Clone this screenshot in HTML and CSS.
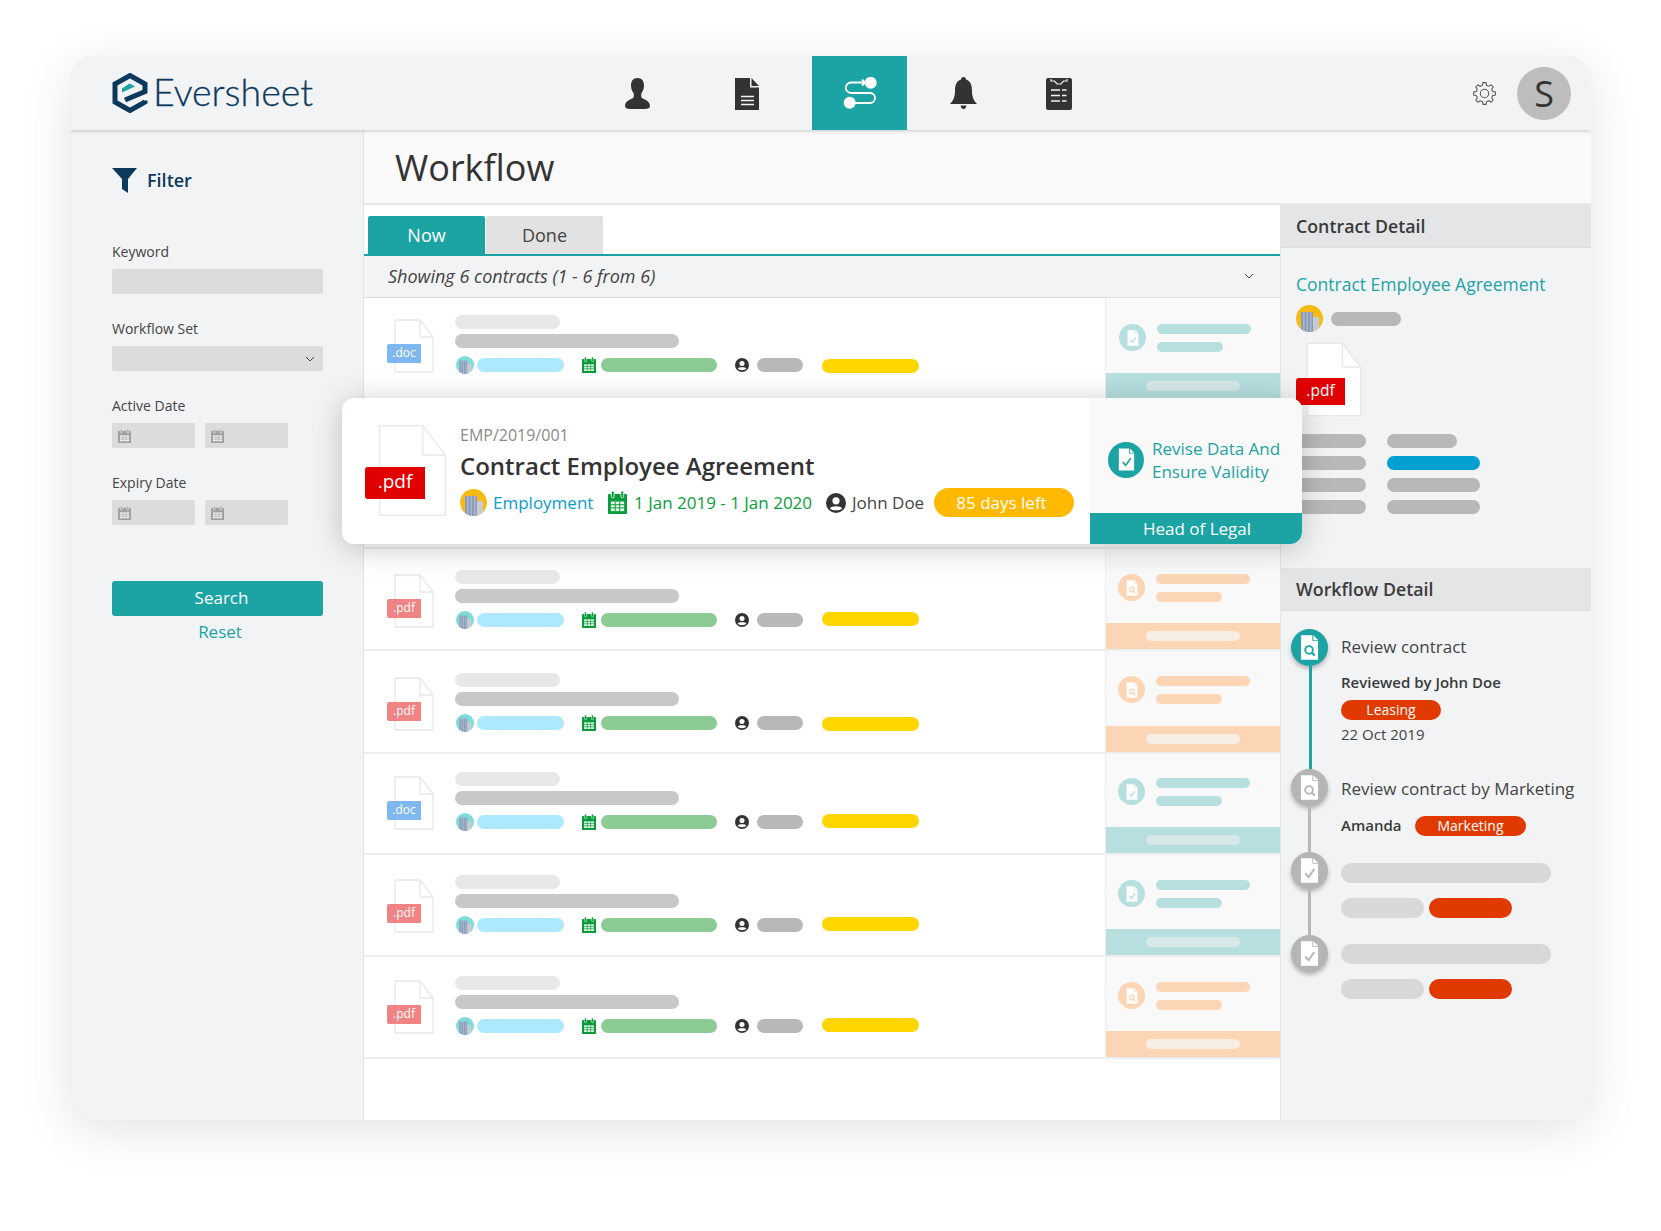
FILE: index.html
```html
<!DOCTYPE html>
<html lang="en">
<head>
<meta charset="utf-8">
<title>Eversheet Workflow</title>
<link rel="stylesheet" href="styles.css">
</head>
<body>
<svg class="defs" xmlns="http://www.w3.org/2000/svg">
  <symbol id="i-page" viewBox="0 0 40 54" preserveAspectRatio="none">
    <path d="M1 1H26L39 18V53H1Z" fill="#fff" stroke="#e8e8e8" stroke-width="1.3" vector-effect="non-scaling-stroke"/>
    <path d="M26 1V18H39" fill="none" stroke="#e8e8e8" stroke-width="1.3" vector-effect="non-scaling-stroke"/>
  </symbol>
  <symbol id="i-building" viewBox="0 0 27 27">
    <rect x="5" y="7" width="12" height="20" fill="#8c9bb8"/>
    <rect x="7" y="7" width="1.5" height="20" fill="#aab6cb"/>
    <rect x="10.5" y="7" width="1.5" height="20" fill="#aab6cb"/>
    <rect x="14" y="7" width="1.5" height="20" fill="#aab6cb"/>
    <rect x="17" y="12" width="6" height="15" fill="#c6cbd4"/>
  </symbol>
  <symbol id="i-cal" viewBox="0 0 20 24" preserveAspectRatio="none">
    <rect x="0" y="3" width="20" height="21" rx="1" fill="currentColor"/>
    <rect x="3.5" y="0" width="3" height="7" rx="1.5" fill="currentColor" stroke="#fff" stroke-width=".8"/>
    <rect x="13.5" y="0" width="3" height="7" rx="1.5" fill="currentColor" stroke="#fff" stroke-width=".8"/>
    <rect x="3" y="11" width="14" height="10" fill="#fff" opacity=".9"/>
    <path d="M3 14.3H17M3 17.6H17M7.6 11V21M12.3 11V21" stroke="currentColor" stroke-width="1"/>
  </symbol>
  <symbol id="i-user" viewBox="0 0 20 20">
    <circle cx="10" cy="10" r="10" fill="#333"/>
    <circle cx="10" cy="7.8" r="3.6" fill="#fff"/>
    <path d="M3.8 15.4C5 12.6 15 12.6 16.2 15.4 14 18 6 18 3.8 15.4Z" fill="#fff"/>
  </symbol>
  <symbol id="i-check" viewBox="0 0 20 26">
    <path d="M1 0H13V6H19V26H1Z" fill="#fff"/>
    <path d="M14 0L19 5H14Z" fill="#fff"/>
    <path d="M5.5 16L9 20L15 11.5" fill="none" stroke="currentColor" stroke-width="2"/>
  </symbol>
  <symbol id="i-search" viewBox="0 0 20 26">
    <path d="M1 0H13V6H19V26H1Z" fill="#fff"/>
    <path d="M14 0L19 5H14Z" fill="#fff"/>
    <circle cx="9.5" cy="15.5" r="4" fill="none" stroke="currentColor" stroke-width="2"/>
    <path d="M12.5 18.5L15.5 21.5" stroke="currentColor" stroke-width="2.2"/>
  </symbol>
  <symbol id="i-tooth" viewBox="-11 -11 22 22">
    <polyline points="-1.94,-7.76 -1.46,-10.4 1.46,-10.4 1.94,-7.76 4.12,-6.86" fill="none" stroke="#555" stroke-width="1"/>
  </symbol>
</svg>

<div class="stage">
  <div class="window">
    <header class="topbar">
      <div class="brand">
        <svg class="logo" viewBox="0 0 36 40" xmlns="http://www.w3.org/2000/svg">
          <path d="M33 27.5V29L18 37.5 3 29V11L18 2.5 33 11V18.5L13 27" fill="none" stroke="#0d3a5c" stroke-width="5"/>
          <path d="M10 15.5L17.500 10.500 23 13.500 10 19.500Z" fill="#1ca3a3"/>
        </svg>
        <span class="brand-name">Eversheet</span>
      </div>
      <nav class="nav">
        <svg class="nav-person" viewBox="0 0 25 31" xmlns="http://www.w3.org/2000/svg"><path d="M12.500 0C17 0 19 3 19 7.500 19 11 18 13 16.500 15 16 16.500 16 18 16.500 19.500 18 21.500 25 22 25 28 25 30 23 31 20 31H5C2 31 0 30 0 28 0 22 7 21.500 8.500 19.500 9 18 9 16.500 8.500 15 7 13 6 11 6 7.500 6 3 8 0 12.500 0Z" fill="#333"/></svg>
        <svg class="nav-doc" viewBox="0 0 24 32" xmlns="http://www.w3.org/2000/svg"><path d="M0 0H15V9.500H24V32H0Z" fill="#333"/><path d="M16.500 0L24 8H16.500Z" fill="#333"/><path d="M6 18.500H19M6 22.500H19M6 26.500H19" stroke="#f2f3f5" stroke-width="1.600"/></svg>
        <div class="nav-active">
          <svg class="nav-flow" viewBox="0 0 34 34" xmlns="http://www.w3.org/2000/svg"><circle cx="27.700" cy="6.700" r="6" fill="#fff"/><circle cx="6.700" cy="26.700" r="6" fill="#fff"/><path d="M22 6.500H8A5.200 5.200 0 0 0 8 17H27A5 5 0 0 1 27 27H12M19 3.500L22 6.500 19 9.500" fill="none" stroke="#fff" stroke-width="1.800"/></svg>
        </div>
        <svg class="nav-bell" viewBox="0 0 27 32" xmlns="http://www.w3.org/2000/svg"><path d="M13.500 0C15 0 16 1 16 2.500 21 4 22 9 22 14 22 20 24 24 27 27H0C3 24 5 20 5 14 5 9 6 4 11 2.500 11 1 12 0 13.500 0Z" fill="#333"/><path d="M10.500 28.500H16.500C16 31 15 32 13.500 32 12 32 11 31 10.500 28.500Z" fill="#333"/></svg>
        <svg class="nav-clip" viewBox="0 0 26 32" xmlns="http://www.w3.org/2000/svg"><rect width="26" height="32" rx="2" fill="#333"/><path d="M5 1V3H8.500L11 6H15L17.500 3H21V1" fill="none" stroke="#f2f3f5" stroke-width="1.200"/><path d="M5 12H14M16 12H20.500M5 17.500H14M16 17.500H20.500M5 23H14M16 23H20.500" stroke="#f2f3f5" stroke-width="1.600"/></svg>
      </nav>
      <div class="account">
        <svg class="gear" viewBox="-11 -11 22 22" xmlns="http://www.w3.org/2000/svg">
          <use href="#i-tooth" x="-11" y="-11" width="22" height="22"/>
          <use href="#i-tooth" x="-11" y="-11" width="22" height="22" transform="rotate(45)"/>
          <use href="#i-tooth" x="-11" y="-11" width="22" height="22" transform="rotate(90)"/>
          <use href="#i-tooth" x="-11" y="-11" width="22" height="22" transform="rotate(135)"/>
          <use href="#i-tooth" x="-11" y="-11" width="22" height="22" transform="rotate(180)"/>
          <use href="#i-tooth" x="-11" y="-11" width="22" height="22" transform="rotate(225)"/>
          <use href="#i-tooth" x="-11" y="-11" width="22" height="22" transform="rotate(270)"/>
          <use href="#i-tooth" x="-11" y="-11" width="22" height="22" transform="rotate(315)"/>
          <circle r="4" fill="none" stroke="#555" stroke-width="1"/>
        </svg>
        <div class="avatar">S</div>
      </div>
    </header>

    <div class="body">
      <aside class="sidebar">
        <div class="filter-head">
          <svg class="filter-icon" viewBox="0 0 25 25" xmlns="http://www.w3.org/2000/svg"><path d="M0 0H25L16 11V25L10 21V11Z" fill="#0d3a5c"/></svg>
          <span class="filter-text">Filter</span>
        </div>
        <div class="label label-first">Keyword</div>
        <div class="input"></div>
        <div class="label">Workflow Set</div>
        <div class="input input-select">
          <svg class="chev" viewBox="0 0 10 6" xmlns="http://www.w3.org/2000/svg"><path d="M1 1L5 5 9 1" fill="none" stroke="#444" stroke-width="1"/></svg>
        </div>
        <div class="label">Active Date</div>
        <div class="date-pair">
          <div class="date"><svg class="date-cal"><use href="#i-cal"/></svg></div>
          <div class="date"><svg class="date-cal"><use href="#i-cal"/></svg></div>
        </div>
        <div class="label">Expiry Date</div>
        <div class="date-pair">
          <div class="date"><svg class="date-cal"><use href="#i-cal"/></svg></div>
          <div class="date"><svg class="date-cal"><use href="#i-cal"/></svg></div>
        </div>
        <div class="btn-search">Search</div>
        <div class="btn-reset">Reset</div>
      </aside>

      <main class="main">
        <div class="title-bar"><h1>Workflow</h1></div>
        <div class="content">
          <section class="list">
            <div class="tabs">
              <div class="tab tab-on">Now</div>
              <div class="tab">Done</div>
            </div>
            <div class="summary">
              <span>Showing 6 contracts (1 - 6 from 6)</span>
              <svg class="chev" viewBox="0 0 10 6" xmlns="http://www.w3.org/2000/svg"><path d="M1 1L5 5 9 1" fill="none" stroke="#444" stroke-width="1"/></svg>
            </div>

            <div class="row row-a">
              <div class="row-main">
                <div class="file"><svg class="page"><use href="#i-page"/></svg><span class="tag tag-doc">.doc</span></div>
                <div class="lines">
                  <div class="bar bar-ref"></div>
                  <div class="bar bar-name"></div>
                  <div class="meta">
                    <span class="ava ava-teal"><svg><use href="#i-building"/></svg></span>
                    <i class="bar bar-type"></i>
                    <svg class="m-cal"><use href="#i-cal"/></svg>
                    <i class="bar bar-date"></i>
                    <svg class="m-user"><use href="#i-user"/></svg>
                    <i class="bar bar-person"></i>
                    <i class="bar bar-days"></i>
                  </div>
                </div>
              </div>
              <div class="act act-teal">
                <div class="act-top">
                  <span class="act-dot"><svg><use href="#i-check"/></svg></span>
                  <div><i class="act-l1"></i><i class="act-l2"></i></div>
                </div>
                <div class="act-band"><i></i></div>
              </div>
            </div>

            <div class="row row-hidden">
              <div class="row-main"></div>
              <div class="act"></div>
            </div>

            <div class="row row-c">
              <div class="row-main">
                <div class="file"><svg class="page"><use href="#i-page"/></svg><span class="tag tag-pdf">.pdf</span></div>
                <div class="lines">
                  <div class="bar bar-ref"></div>
                  <div class="bar bar-name"></div>
                  <div class="meta">
                    <span class="ava ava-teal"><svg><use href="#i-building"/></svg></span>
                    <i class="bar bar-type"></i>
                    <svg class="m-cal"><use href="#i-cal"/></svg>
                    <i class="bar bar-date"></i>
                    <svg class="m-user"><use href="#i-user"/></svg>
                    <i class="bar bar-person"></i>
                    <i class="bar bar-days"></i>
                  </div>
                </div>
              </div>
              <div class="act act-orange">
                <div class="act-top">
                  <span class="act-dot"><svg><use href="#i-search"/></svg></span>
                  <div><i class="act-l1"></i><i class="act-l2"></i></div>
                </div>
                <div class="act-band"><i></i></div>
              </div>
            </div>

            <div class="row row-d">
              <div class="row-main">
                <div class="file"><svg class="page"><use href="#i-page"/></svg><span class="tag tag-pdf">.pdf</span></div>
                <div class="lines">
                  <div class="bar bar-ref"></div>
                  <div class="bar bar-name"></div>
                  <div class="meta">
                    <span class="ava ava-teal"><svg><use href="#i-building"/></svg></span>
                    <i class="bar bar-type"></i>
                    <svg class="m-cal"><use href="#i-cal"/></svg>
                    <i class="bar bar-date"></i>
                    <svg class="m-user"><use href="#i-user"/></svg>
                    <i class="bar bar-person"></i>
                    <i class="bar bar-days"></i>
                  </div>
                </div>
              </div>
              <div class="act act-orange">
                <div class="act-top">
                  <span class="act-dot"><svg><use href="#i-search"/></svg></span>
                  <div><i class="act-l1"></i><i class="act-l2"></i></div>
                </div>
                <div class="act-band"><i></i></div>
              </div>
            </div>

            <div class="row row-e">
              <div class="row-main">
                <div class="file"><svg class="page"><use href="#i-page"/></svg><span class="tag tag-doc">.doc</span></div>
                <div class="lines">
                  <div class="bar bar-ref"></div>
                  <div class="bar bar-name"></div>
                  <div class="meta">
                    <span class="ava ava-teal"><svg><use href="#i-building"/></svg></span>
                    <i class="bar bar-type"></i>
                    <svg class="m-cal"><use href="#i-cal"/></svg>
                    <i class="bar bar-date"></i>
                    <svg class="m-user"><use href="#i-user"/></svg>
                    <i class="bar bar-person"></i>
                    <i class="bar bar-days"></i>
                  </div>
                </div>
              </div>
              <div class="act act-teal">
                <div class="act-top">
                  <span class="act-dot"><svg><use href="#i-check"/></svg></span>
                  <div><i class="act-l1"></i><i class="act-l2"></i></div>
                </div>
                <div class="act-band"><i></i></div>
              </div>
            </div>

            <div class="row row-f">
              <div class="row-main">
                <div class="file"><svg class="page"><use href="#i-page"/></svg><span class="tag tag-pdf">.pdf</span></div>
                <div class="lines">
                  <div class="bar bar-ref"></div>
                  <div class="bar bar-name"></div>
                  <div class="meta">
                    <span class="ava ava-teal"><svg><use href="#i-building"/></svg></span>
                    <i class="bar bar-type"></i>
                    <svg class="m-cal"><use href="#i-cal"/></svg>
                    <i class="bar bar-date"></i>
                    <svg class="m-user"><use href="#i-user"/></svg>
                    <i class="bar bar-person"></i>
                    <i class="bar bar-days"></i>
                  </div>
                </div>
              </div>
              <div class="act act-teal">
                <div class="act-top">
                  <span class="act-dot"><svg><use href="#i-check"/></svg></span>
                  <div><i class="act-l1"></i><i class="act-l2"></i></div>
                </div>
                <div class="act-band"><i></i></div>
              </div>
            </div>

            <div class="row row-g">
              <div class="row-main">
                <div class="file"><svg class="page"><use href="#i-page"/></svg><span class="tag tag-pdf">.pdf</span></div>
                <div class="lines">
                  <div class="bar bar-ref"></div>
                  <div class="bar bar-name"></div>
                  <div class="meta">
                    <span class="ava ava-teal"><svg><use href="#i-building"/></svg></span>
                    <i class="bar bar-type"></i>
                    <svg class="m-cal"><use href="#i-cal"/></svg>
                    <i class="bar bar-date"></i>
                    <svg class="m-user"><use href="#i-user"/></svg>
                    <i class="bar bar-person"></i>
                    <i class="bar bar-days"></i>
                  </div>
                </div>
              </div>
              <div class="act act-orange">
                <div class="act-top">
                  <span class="act-dot"><svg><use href="#i-search"/></svg></span>
                  <div><i class="act-l1"></i><i class="act-l2"></i></div>
                </div>
                <div class="act-band"><i></i></div>
              </div>
            </div>
          </section>

          <aside class="panel">
            <div class="panel-head">Contract Detail</div>
            <div class="detail">
              <div class="detail-title">Contract Employee Agreement</div>
              <div class="detail-owner">
                <span class="ava ava-yellow ava-27"><svg><use href="#i-building"/></svg></span>
                <i class="bar bar-owner"></i>
              </div>
              <div class="detail-file"><svg class="page-md"><use href="#i-page"/></svg><span class="tag-md">.pdf</span></div>
              <div class="detail-grid">
                <i class="bar g-l"></i><i class="bar g-s"></i>
                <i class="bar g-l"></i><i class="bar g-b"></i>
                <i class="bar g-l"></i><i class="bar g-r"></i>
                <i class="bar g-l"></i><i class="bar g-r"></i>
              </div>
            </div>
            <div class="panel-head">Workflow Detail</div>
            <div class="steps">
              <div class="step step-1">
                <div class="rail">
                  <span class="dot dot-on"><svg><use href="#i-search"/></svg></span>
                  <i class="rail-line rail-on"></i>
                </div>
                <div class="step-body">
                  <div class="step-title">Review contract</div>
                  <div class="step-who">Reviewed by John Doe</div>
                  <div class="chip chip-lease">Leasing</div>
                  <div class="step-date">22 Oct 2019</div>
                </div>
              </div>
              <div class="step step-2">
                <div class="rail">
                  <span class="dot"><svg><use href="#i-search"/></svg></span>
                  <i class="rail-line"></i>
                </div>
                <div class="step-body">
                  <div class="step-title">Review contract by Marketing</div>
                  <div class="step-pair">
                    <span class="step-who-inline">Amanda</span>
                    <span class="chip chip-market">Marketing</span>
                  </div>
                </div>
              </div>
              <div class="step step-3">
                <div class="rail">
                  <span class="dot"><svg><use href="#i-check"/></svg></span>
                  <i class="rail-line"></i>
                </div>
                <div class="step-body step-body-3">
                  <i class="sk-long"></i>
                  <div class="sk-pair"><i class="sk-grey"></i><i class="sk-red"></i></div>
                </div>
              </div>
              <div class="step">
                <div class="rail">
                  <span class="dot"><svg><use href="#i-check"/></svg></span>
                </div>
                <div class="step-body step-body-4">
                  <i class="sk-long"></i>
                  <div class="sk-pair"><i class="sk-grey"></i><i class="sk-red"></i></div>
                </div>
              </div>
            </div>
          </aside>
        </div>
      </main>
    </div>

    <article class="card">
      <div class="card-main">
        <div class="card-file"><svg class="page-lg"><use href="#i-page"/></svg><span class="tag-lg">.pdf</span></div>
        <div class="card-info">
          <div class="card-ref">EMP/2019/001</div>
          <div class="card-title">Contract Employee Agreement</div>
          <div class="card-meta">
            <span class="ava ava-yellow ava-27"><svg><use href="#i-building"/></svg></span>
            <span class="c-type">Employment</span>
            <svg class="c-cal"><use href="#i-cal"/></svg>
            <span class="c-date">1 Jan 2019 - 1 Jan 2020</span>
            <svg class="c-user"><use href="#i-user"/></svg>
            <span class="c-name">John Doe</span>
            <span class="c-days">85 days left</span>
          </div>
        </div>
      </div>
      <div class="card-side">
        <div class="card-task">
          <span class="task-dot"><svg><use href="#i-check"/></svg></span>
          <div class="task-text">Revise Data And<br>Ensure Validity</div>
        </div>
        <div class="card-role">Head of Legal</div>
      </div>
    </article>
  </div>
</div>
</body>
</html>
```

FILE: styles.css
```css
* { box-sizing: border-box; }

html, body { margin: 0; padding: 0; background: #fff; }

body {
  font-family: "Open Sans", "Liberation Sans", sans-serif;
  color: #444;
}

i { display: block; font-style: normal; }

.defs { display: none; }

.stage {
  width: 1661px;
  height: 1231px;
  padding: 56px 70px 111px;
  overflow: hidden;
}

.window {
  position: relative;
  width: 1521px;
  height: 1064px;
  background: #fff;
  border-radius: 22px;
  overflow: hidden;
  box-shadow: 0 10px 50px rgba(0, 0, 0, .11);
}

/* header */
.topbar {
  position: relative;
  z-index: 2;
  display: flex;
  align-items: center;
  height: 74px;
  background: #f2f3f5;
  box-shadow: 0 1px 4px rgba(0, 0, 0, .2);
}

.brand {
  display: flex;
  align-items: center;
  width: 555px;
  padding-left: 42px;
}

.logo { width: 36px; height: 40px; flex: none; }

.brand-name {
  margin: 0 0 2px 5px;
  font-family: "Lato", sans-serif;
  font-weight: 300;
  font-size: 37.5px;
  line-height: 40px;
  color: #0d3a5c;
  -webkit-text-stroke: .3px #0d3a5c;
}

.nav { display: flex; align-items: center; height: 74px; }
.nav-person { width: 25px; height: 31px; }
.nav-doc { width: 24px; height: 32px; margin-left: 85px; margin-top: 2px; }
.nav-active {
  display: flex;
  align-items: center;
  justify-content: center;
  width: 95px;
  height: 74px;
  margin-left: 53px;
  background: #1ca3a3;
}
.nav-flow { width: 34px; height: 34px; }
.nav-bell { width: 27px; height: 32px; margin-left: 43px; }
.nav-clip { width: 26px; height: 32px; margin-left: 69px; margin-top: 2px; }

.account {
  display: flex;
  align-items: center;
  margin-left: auto;
  padding-right: 20px;
}
.gear { width: 23px; height: 23px; }
.avatar {
  width: 54px;
  height: 53px;
  margin-left: 21px;
  border-radius: 50%;
  background: #bdbdbd;
  color: #333;
  font-size: 36px;
  line-height: 53px;
  text-align: center;
}

/* layout */
.body { display: flex; height: 990px; }

.sidebar {
  flex: none;
  width: 294px;
  padding: 38px 0 0 42px;
  background: #f2f3f5;
  border-right: 1px solid #e4e4e4;
}

.filter-head {
  display: flex;
  align-items: center;
  height: 25px;
  font-size: 18px;
  font-weight: 600;
  color: #0d3a5c;
}
.filter-icon { width: 25px; height: 25px; margin-right: 10px; }
.filter-text { margin-bottom: 2px; }

.label {
  height: 20px;
  margin-top: 25px;
  font-size: 14px;
  line-height: 20px;
  color: #444;
}
.label-first { margin-top: 49px; }

.input {
  position: relative;
  width: 211px;
  height: 25px;
  margin-top: 7px;
  background: #dcdcdc;
  border-radius: 2px;
}
.input-select { display: flex; align-items: center; justify-content: flex-end; padding-right: 8px; }

.chev { width: 10px; height: 6px; }

.date-pair { display: flex; gap: 10px; margin-top: 7px; }
.date {
  display: flex;
  align-items: center;
  width: 83px;
  height: 25px;
  padding-left: 6px;
  background: #dcdcdc;
  border-radius: 2px;
}
.date-cal { width: 13px; height: 14px; color: #a0a0a0; }

.btn-search {
  width: 211px;
  height: 35px;
  margin-top: 56px;
  padding-left: 8px;
  background: #1ca3a3;
  border-radius: 3px;
  color: #fff;
  font-size: 17px;
  line-height: 33px;
  text-align: center;
}
.btn-reset {
  width: 211px;
  margin-top: 4px;
  padding-left: 5px;
  color: #1ca3a3;
  font-size: 17px;
  line-height: 24px;
  text-align: center;
}

.main { flex: 1; display: flex; flex-direction: column; min-width: 0; }

.title-bar {
  display: flex;
  align-items: center;
  height: 75px;
  padding: 2px 0 0 31px;
  background: #fafafa;
  border-bottom: 2px solid #e8e8e8;
}
.title-bar h1 { margin: 0; font-size: 36px; font-weight: 400; color: #333; line-height: 44px; }

.content { flex: 1; display: flex; min-height: 0; }

.list { flex: none; width: 916px; background: #fff; }

.tabs {
  display: flex;
  gap: 1px;
  height: 51px;
  padding: 11px 0 0 4px;
  border-bottom: 2px solid #1ca3a3;
}
.tab {
  width: 117px;
  height: 38px;
  background: #e2e2e2;
  border-radius: 2px 2px 0 0;
  color: #444;
  font-size: 18px;
  line-height: 38px;
  text-align: center;
}
.tab-on { background: #1ca3a3; color: #fff; }

.summary {
  display: flex;
  align-items: center;
  justify-content: space-between;
  height: 42px;
  padding: 0 26px 1px 24px;
  background: #f2f3f5;
  border-bottom: 1px solid #dedede;
  font-size: 18px;
  font-style: italic;
  color: #444;
}

/* rows */
.row { display: flex; border-bottom: 2px solid #eee; }
.row-a { height: 103px; }
.row-hidden { height: 148px; }
.row-c { height: 102px; }
.row-d { height: 103px; }
.row-e { height: 101px; }
.row-f { height: 102px; }
.row-g { height: 102px; }

.row-main { flex: 1; display: flex; padding-left: 23px; }
.row-a .row-main { padding-top: 17px; }
.row-c .row-main { padding-top: 21px; }
.row-d .row-main { padding-top: 22px; }
.row-e .row-main { padding-top: 18px; }
.row-f .row-main { padding-top: 20px; }
.row-g .row-main { padding-top: 19px; }

.file { position: relative; flex: none; width: 68px; padding: 4px 0 0 7px; }
.page { display: block; width: 40px; height: 54px; }
.tag {
  position: absolute;
  left: 0;
  top: 29px;
  width: 34px;
  height: 19px;
  border-radius: 2px 0 0 2px;
  color: #fff;
  font-size: 12px;
  line-height: 18px;
  text-align: center;
}
.tag-pdf { background: #f08383; }
.tag-doc { background: #7fb8ef; }

.bar { border-radius: 7px; height: 14px; }
.bar-ref { width: 105px; background: #e8e8e8; }
.bar-name { width: 224px; margin-top: 5px; background: #c8c8c8; }

.meta { display: flex; align-items: center; height: 14px; margin: 10px 0 0 1px; }
.ava {
  display: block;
  flex: none;
  width: 18px;
  height: 18px;
  border-radius: 50%;
  overflow: hidden;
}
.ava svg { display: block; width: 100%; height: 100%; }
.ava-teal { background: #7fdcd8; }
.ava-yellow { background: #f5bb14; }
.ava-27 { width: 27px; height: 27px; }

.bar-type { width: 87px; margin-left: 3px; background: #aee8ff; }
.m-cal { flex: none; width: 14px; height: 16px; margin-left: 18px; color: #0a9c3a; }
.bar-date { width: 116px; margin-left: 5px; background: #8ccb94; }
.m-user { flex: none; width: 14px; height: 14px; margin-left: 18px; }
.bar-person { width: 46px; margin-left: 8px; background: #b8b8b8; }
.bar-days { width: 97px; margin: 0 0 2px 19px; background: #ffd600; }
.row-a .bar-days, .row-d .bar-days { margin-bottom: -2px; }

.act {
  flex: none;
  display: flex;
  flex-direction: column;
  width: 175px;
  background: #f9f9f9;
  border-left: 1px solid #eee;
}
.act-top { flex: 1; display: flex; gap: 11px; padding: 24px 0 0 12px; }
.row-a .act-top { padding: 26px 0 0 13px; }
.row-c .act-top, .row-d .act-top, .row-f .act-top, .row-g .act-top { padding-top: 25px; }
.act-dot {
  display: flex;
  align-items: center;
  justify-content: center;
  width: 27px;
  height: 27px;
  border-radius: 50%;
}
.act-dot svg { width: 12px; height: 16px; }
.act-l1 { width: 94px; height: 10px; border-radius: 5px; }
.act-l2 { width: 66px; height: 10px; margin-top: 8px; border-radius: 5px; }
.act-band { display: flex; align-items: center; justify-content: center; height: 26px; }
.act-band i { width: 94px; height: 10px; border-radius: 5px; }

.act-teal .act-dot { background: #b7dfdf; color: #b7dfdf; }
.act-teal .act-l1, .act-teal .act-l2 { background: #b7dfdf; }
.act-teal .act-band { background: #b7dfdf; }
.act-teal .act-band i { background: #d6e8e8; }

.act-orange .act-dot { background: #fcd5b4; color: #fcd5b4; }
.act-orange .act-l1, .act-orange .act-l2 { background: #fcd5b4; }
.act-orange .act-band { background: #fcd5b4; }
.act-orange .act-band i { background: #f7efe6; }

/* right panel */
.panel {
  flex: 1;
  background: #f2f3f5;
  border-left: 1px solid #e4e4e4;
}
.panel-head {
  height: 43px;
  padding-left: 15px;
  background: #e4e5e7;
  border-bottom: 1px solid #dcdcdc;
  color: #3a3a3a;
  font-size: 17.8px;
  font-weight: 600;
  line-height: 42px;
}
.detail { height: 320px; padding: 24px 0 0 15px; }
.detail-title { color: #1ca3a3; font-size: 17.5px; font-weight: 500; line-height: 24px; }
.detail-owner { display: flex; align-items: center; gap: 8px; margin-top: 9px; }
.bar-owner { width: 70px; background: #b8b8b8; }
.detail-file { position: relative; height: 75px; margin-top: 10px; padding-left: 10px; }
.page-md { display: block; width: 56px; height: 75px; }
.tag-md {
  position: absolute;
  left: 0;
  top: 36px;
  width: 49px;
  height: 27px;
  background: #e00000;
  border-radius: 3px 0 0 3px;
  color: #fff;
  font-size: 15.5px;
  line-height: 25px;
  text-align: center;
}
.detail-grid {
  display: grid;
  grid-template-columns: 70px 93px;
  column-gap: 21px;
  row-gap: 8px;
  margin-top: 17px;
}
.g-l, .g-r, .g-s { background: #b8b8b8; }
.g-s { width: 70px; }
.g-b { background: #05a0d2; }

.steps { padding: 18px 0 0 10px; }
.step { display: flex; gap: 13px; }
.step-1 { height: 140px; }
.step-2, .step-3 { height: 83px; }
.rail { flex: none; display: flex; flex-direction: column; align-items: center; width: 37px; }
.dot {
  flex: none;
  display: flex;
  align-items: center;
  justify-content: center;
  width: 37px;
  height: 37px;
  border-radius: 50%;
  background: #b5b5b5;
  color: #b5b5b5;
  box-shadow: 0 3px 4px rgba(0, 0, 0, .25);
}
.dot-on { background: #1ca3a3; color: #1ca3a3; }
.dot svg { width: 19px; height: 25px; }
.rail-line { flex: 1; width: 3px; background: #b8b8b8; }
.rail-on { background: #1ca3a3; margin-left: 2px; }

.step-body { padding-top: 6px; }
.step-2 .step-body { padding-top: 8px; }
.step-body-3 { padding-top: 11px; }
.step-body-4 { padding-top: 9px; }

.step-title { font-size: 17px; line-height: 24px; color: #444; white-space: nowrap; }
.step-who { margin-top: 13px; font-size: 15px; font-weight: 600; line-height: 20px; color: #3a3a3a; white-space: nowrap; }
.chip {
  display: block;
  height: 20px;
  border-radius: 10px;
  background: #e03a00;
  color: #fff;
  font-size: 14px;
  line-height: 20px;
  text-align: center;
}
.chip-lease { width: 100px; margin-top: 8px; }
.chip-market { width: 111px; }
.step-date { margin-top: 4px; font-size: 15px; line-height: 20px; color: #444; }
.step-pair { display: flex; align-items: center; gap: 14px; margin-top: 14px; }
.step-who-inline { width: 60px; margin-bottom: 1px; font-size: 15px; font-weight: 600; line-height: 20px; color: #3a3a3a; }

.sk-long { width: 210px; height: 20px; border-radius: 10px; background: #d8d8d8; }
.sk-pair { display: flex; gap: 5px; margin-top: 15px; }
.sk-grey, .sk-red { width: 83px; height: 20px; border-radius: 10px; }
.sk-grey { background: #d8d8d8; }
.sk-red { background: #e03a00; }

/* floating card */
.card {
  position: absolute;
  left: 272px;
  top: 342px;
  z-index: 3;
  display: flex;
  width: 960px;
  height: 146px;
  background: #fff;
  border-radius: 12px;
  overflow: hidden;
  box-shadow: 0 4px 30px rgba(0, 0, 0, .22);
}
.card-main { flex: none; display: flex; width: 748px; padding-left: 23px; }
.card-file { position: relative; flex: none; width: 95px; padding: 26px 0 0 13px; }
.page-lg { display: block; width: 69px; height: 93px; }
.tag-lg {
  position: absolute;
  left: 0;
  top: 69px;
  width: 60px;
  height: 32px;
  background: #e00000;
  border-radius: 3px 0 0 3px;
  color: #fff;
  font-size: 19px;
  line-height: 29px;
  text-align: center;
}
.card-info { padding-top: 26px; white-space: nowrap; }
.card-ref { font-size: 16px; line-height: 22px; color: #8a8a8a; }
.card-title { margin-top: 3px; font-size: 24px; font-weight: 600; line-height: 34px; color: #333; }
.card-meta { display: flex; align-items: center; height: 29px; margin-top: 5px; font-size: 17px; }
.c-type { margin-left: 6px; width: 100px; color: #0a9bd0; }
.c-cal { width: 19px; height: 23px; margin-left: 15px; color: #0a9c3a; }
.c-date { margin-left: 7px; width: 177px; color: #0a9c3a; }
.c-user { width: 20px; height: 20px; margin-left: 15px; }
.c-name { margin-left: 6px; width: 72px; color: #444; }
.c-days {
  width: 140px;
  height: 29px;
  margin-left: 10px;
  padding-right: 5px;
  border-radius: 15px;
  background: #ffb900;
  color: #fff;
  line-height: 29px;
  text-align: center;
}
.card-side { flex: 1; display: flex; flex-direction: column; background: #f9f9f9; }
.card-task { flex: 1; display: flex; align-items: center; gap: 8px; padding: 8px 0 0 18px; }
.task-dot {
  flex: none;
  display: flex;
  align-items: center;
  justify-content: center;
  width: 36px;
  height: 36px;
  border-radius: 50%;
  background: #1ca3a3;
  color: #1ca3a3;
}
.task-dot svg { width: 17px; height: 23px; }
.task-text { color: #1ca3a3; font-size: 17px; line-height: 23px; white-space: nowrap; }
.card-role {
  height: 31px;
  padding-left: 2px;
  background: #1ca3a3;
  color: #fff;
  font-size: 17px;
  line-height: 31px;
  text-align: center;
}
```
